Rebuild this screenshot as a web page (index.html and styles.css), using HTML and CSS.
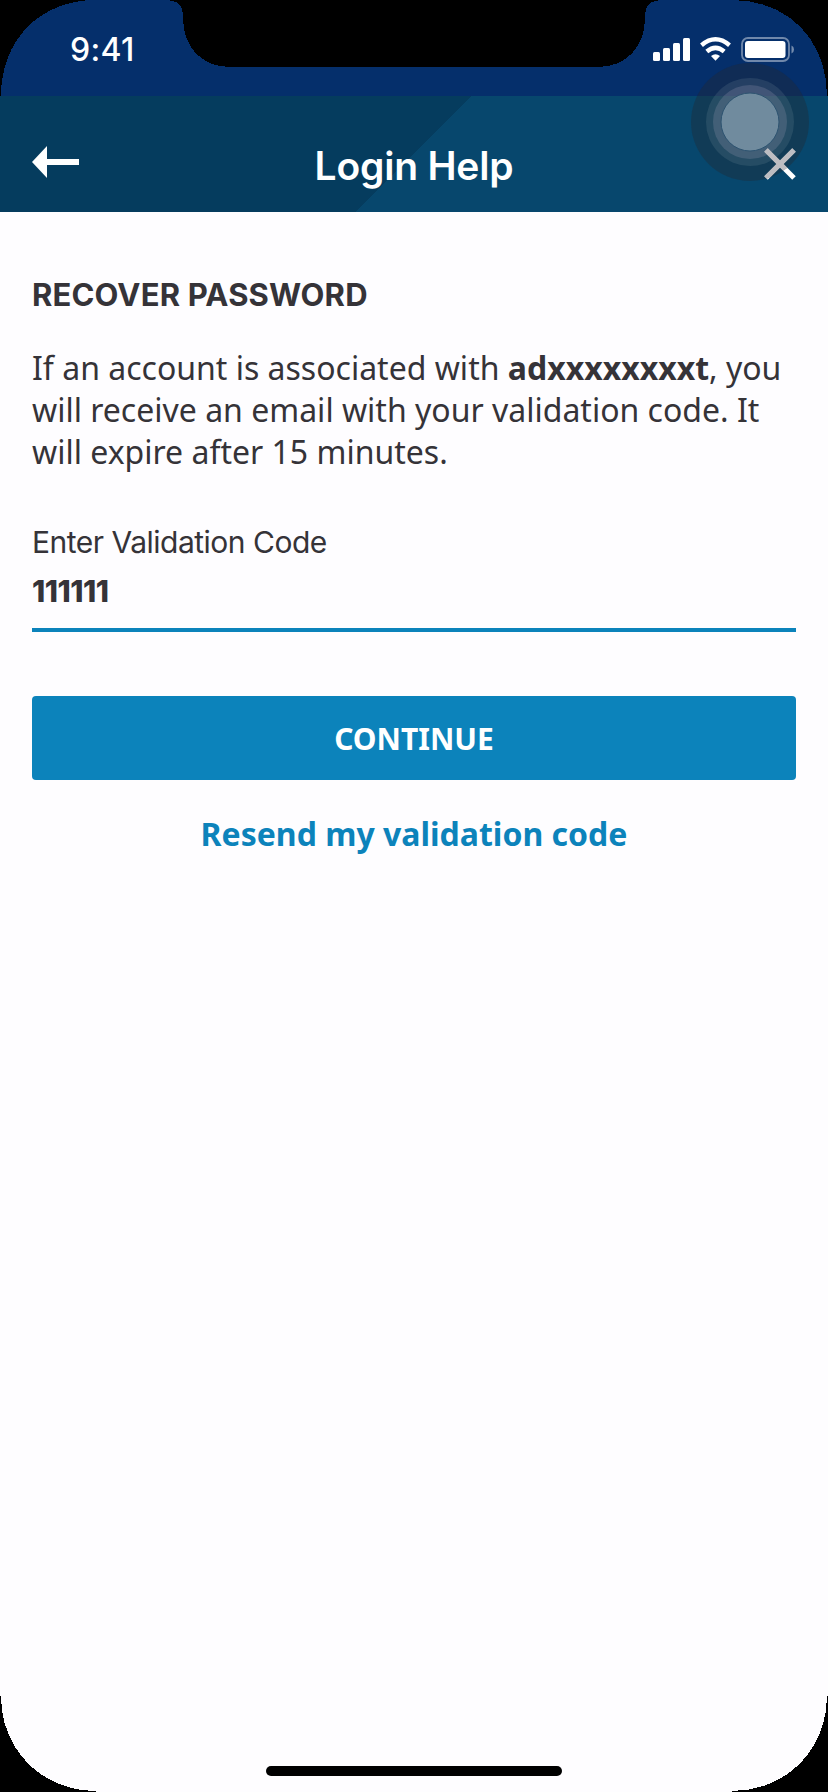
FILE: index.html
```html
<!DOCTYPE html>
<html lang="en">
<head>
<meta charset="utf-8">
<title>Login Help</title>
<link rel="stylesheet" href="styles.css">
</head>
<body>
<div class="phone">
  <div class="status-bar">
    <span class="time">9:41</span>
    <svg class="status-icons" width="142" height="26" viewBox="0 0 142 26" fill="#fff">
      <rect x="0" y="15" width="7" height="9" rx="1.5"/>
      <rect x="10" y="11" width="7" height="13" rx="1.5"/>
      <rect x="20" y="6" width="7" height="18" rx="1.5"/>
      <rect x="30" y="1" width="7" height="23" rx="1.5"/>
      <g fill="none" stroke="#fff" stroke-width="4.4">
        <path d="M48.5 8.2Q62.5-3.6 76.500 8.200"/>
        <path d="M53.800 14.500Q62.500 7.200 71.200 14.500"/>
      </g>
      <path d="M58 19Q62.500 15.400 67 19L62.500 23.800Z"/>
      <rect x="89" y="1" width="47" height="23" rx="6" fill="none" stroke="#fff" stroke-opacity=".43" stroke-width="1.8"/>
      <rect x="92" y="4" width="40.500" height="17" rx="3"/>
      <path d="M138.500 8.500Q141 9.500 141 12.500T138.500 16.500Z" opacity=".45"/>
    </svg>
  </div>
  <header class="header">
    <svg class="back" width="48" height="32" viewBox="0 0 48 32" fill="#fff"><path d="M0 16L15 0V13H47V19H15V32Z"/></svg>
    <h1 class="title">Login Help</h1>
    <svg class="close" width="32" height="32" viewBox="0 0 32 32" stroke="#fff" stroke-width="5"><path d="M2 2L30 30M30 2L2 30"/></svg>
  </header>
  <main class="content">
    <h2 class="heading">RECOVER PASSWORD</h2>
    <p class="message">If an account is associated with <b>adxxxxxxxxt</b>, you<br>will receive an email with your validation code. It<br>will expire after 15 minutes.</p>
    <div class="field">
      <span class="label">Enter Validation Code</span>
      <span class="value">111111</span>
    </div>
    <div class="button"><span>CONTINUE</span></div>
    <div class="resend"><span>Resend my validation code</span></div>
  </main>
  <div class="home-indicator"></div>
  <svg class="touch" width="118" height="118" viewBox="0 0 118 118">
    <clipPath id="touch-area"><circle cx="59" cy="59" r="59"/></clipPath>
    <circle cx="59" cy="59" r="59" fill="#27272c" fill-opacity=".34"/>
    <circle cx="59" cy="59" r="44" fill="#8fa8b0" fill-opacity=".16"/>
    <circle cx="59" cy="59" r="37" fill="#b0a9c0" fill-opacity=".21"/>
    <circle cx="59" cy="59" r="29" fill="#708b9e" stroke="#2d5370" stroke-width="1"/>
    <path clip-path="url(#touch-area)" d="M75 87L103 115M103 87L75 115" stroke="#bdbdc2" stroke-width="5"/>
  </svg>
  <svg class="bezel" width="828" height="1792" viewBox="0 0 828 1792" shape-rendering="crispEdges">
    <path d="M0 0H96C40 0 1 40 1 96H0Z"/>
    <path d="M828 0H732C788 0 827 40 827 96H828Z"/>
    <path d="M0 1792V1696H1C1 1750 42 1791 96 1791V1792Z"/>
    <path d="M828 1792V1696H827C827 1750 786 1791 732 1791V1792Z"/>
    <path d="M166 0C179 1 183 5 183 18C183 46 201 67 230 67H598C627 67 645 46 645 18C645 5 649 1 662 0Z"/>
  </svg>
</div>
</body>
</html>
```
FILE: styles.css
```css
* { box-sizing: border-box; }
body { margin: 0; }
.phone {
  position: relative;
  width: 828px;
  height: 1792px;
  overflow: hidden;
  display: flex;
  flex-direction: column;
  background: #fefdff;
  color: #353338;
}
.status-bar {
  height: 96px;
  padding: 30px 33px 0 70px;
  display: flex;
  justify-content: space-between;
  background: #052f6b;
  color: #fff;
}
.time { font: 500 32px/40px Inter, sans-serif; letter-spacing: 0.3px; }
.status-icons { margin-top: 7px; }
.header {
  height: 116px;
  padding: 20px 32px 0;
  display: grid;
  grid-template-columns: 48px 1fr 48px;
  align-items: start;
  background: linear-gradient(135deg, #053c5e 0 50%, #07476d 50%);
  color: #fff;
}
.back { margin-top: 30px; }
.close { margin-top: 32px; justify-self: end; }
.title { margin: 26px 0 0; font: 600 39px/48px Inter, sans-serif; letter-spacing: -0.2px; white-space: nowrap; text-align: center; }
.content { padding: 63px 32px 0; flex: 1; display: flex; flex-direction: column; }
.heading { margin: 0; font: 700 31px/40px Inter, sans-serif; letter-spacing: 0.15px; white-space: nowrap; }
.message { margin: 32px 0 0; font: 400 32px/42px "Noto Sans", sans-serif; white-space: nowrap; }
.message b { font-weight: 700; }
.field {
  margin-top: 49px;
  height: 110px;
  border-bottom: 4px solid #0c83bb;
  display: flex;
  flex-direction: column;
}
.label { font: 400 30px/40px Inter, sans-serif; letter-spacing: -0.5px; }
.value { font: 800 30px/40px Inter, sans-serif; letter-spacing: -0.5px; margin-top: 9px; }
.button {
  margin-top: 64px;
  height: 84px;
  padding-top: 2px;
  border-radius: 4px;
  display: flex;
  align-items: center;
  justify-content: center;
  background: #0c83bb;
  color: #fff;
  font: 700 30px/40px "Noto Sans", sans-serif;
}
.resend { margin-top: 33px; text-align: center; color: #0c83bb; font: 700 32px/42px "Noto Sans", sans-serif; }
.home-indicator { align-self: center; width: 296px; height: 10px; margin-bottom: 16px; border-radius: 5px; background: #000; }
.touch { position: absolute; left: 691px; top: 63px; }
.bezel { position: absolute; left: 0; top: 0; }
```
